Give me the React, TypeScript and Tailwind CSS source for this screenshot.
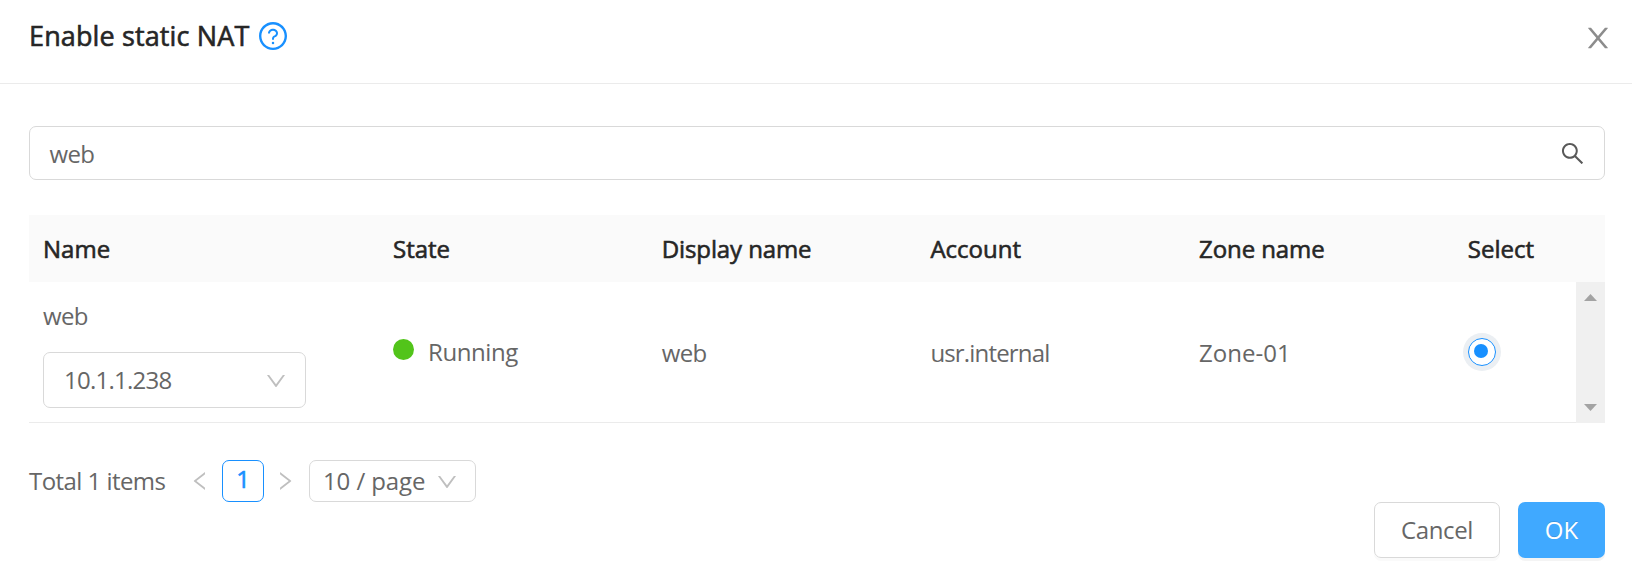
import {
  AiOutlineDown,
  AiOutlineLeft,
  AiOutlineQuestionCircle,
  AiOutlineRight,
  AiOutlineSearch,
} from "react-icons/ai";

const headings = [
  { label: "Name", style: "w-[350px]" },
  { label: "State", style: "w-[268.7px]" },
  { label: "Display name", style: "w-[268.7px] tracking-[-0.1px]" },
  { label: "Account", style: "w-[268.7px]" },
  { label: "Zone name", style: "w-[268.7px] tracking-[-0.1px]" },
  { label: "Select", style: "flex-1" },
];

function CloseIcon() {
  return (
    <svg className="mt-[22px] size-[32px] text-[#8c8c8c]" viewBox="0 0 1024 1024" fill="currentColor">
      <path d="M563.8 512l262.5-312.9c4.4-5.2.7-13.1-6.1-13.1h-79.8c-4.7 0-9.2 2.1-12.3 5.7L511.6 449.8 295.1 191.7c-3-3.6-7.5-5.7-12.3-5.7H203c-6.8 0-10.5 7.9-6.1 13.1L459.4 512 196.9 824.9A7.95 7.95 0 0 0 203 838h79.8c4.7 0 9.2-2.1 12.3-5.7l216.5-258.1 216.5 258.1c3 3.6 7.5 5.7 12.3 5.7h79.8c6.8 0 10.5-7.9 6.1-13.1L563.8 512z" />
    </svg>
  );
}

function Header() {
  return (
    <header className="flex h-[84px] items-start justify-between border-b border-[#ebebeb] pl-[29px] pr-[18px]">
      <div className="flex items-center pt-[15px]">
        <h1 className="w-[228px] whitespace-nowrap text-[27px] leading-[42px] tracking-[0.13px] text-[#262626] [-webkit-text-stroke:0.6px_#262626]">
          Enable static NAT
        </h1>
        <AiOutlineQuestionCircle className="size-[32px] text-[#1890ff]" />
      </div>
      <CloseIcon />
    </header>
  );
}

function SearchBox() {
  return (
    <div className="flex h-[54px] items-center justify-between rounded-[7px] border border-[#d9d9d9] pl-[19.5px] pr-[18px]">
      <span className="pt-[2px] tracking-[-0.6px]">web</span>
      <AiOutlineSearch className="size-[27px] text-[#595959]" />
    </div>
  );
}

function ResultTable() {
  return (
    <section className="mt-[35px]">
      <div className="flex h-[67px] items-center bg-[#fafafa] pl-[14px] text-[#262626] [-webkit-text-stroke:0.6px_#262626]">
        {headings.map((h) => (
          <div key={h.label} className={h.style}>
            {h.label}
          </div>
        ))}
      </div>
      <div className="flex h-[141px]">
        <div className="flex flex-1 items-center border-b border-[#ebebeb] pl-[14px]">
          <div className="w-[350px] shrink-0 pt-px">
            <div className="leading-[38px] tracking-[-0.6px]">web</div>
            <div className="mt-[17px] flex h-[56px] w-[263px] items-center justify-between rounded-[7px] border border-[#d9d9d9] pl-[20px] pr-[17px]">
              <span className="tracking-[-0.75px]">10.1.1.238</span>
              <AiOutlineDown className="mt-[2px] size-[24px] text-[#bfbfbf]" />
            </div>
          </div>
          <div className="flex w-[268.7px] shrink-0 items-center">
            <span className="mb-[5px] mr-[14px] size-[21px] rounded-full bg-[#52c41a]" />
            <span className="tracking-[-0.4px]">Running</span>
          </div>
          <div className="w-[268.7px] shrink-0 pt-px tracking-[-0.6px]">web</div>
          <div className="w-[268.7px] shrink-0 pt-px tracking-[-0.83px]">usr.internal</div>
          <div className="w-[268.7px] shrink-0 pt-px">Zone-01</div>
          <div className="flex size-[28px] items-center justify-center rounded-full border border-[#1890ff] bg-white shadow-[0_0_0_5px_#ebeff3]">
            <span className="mb-[2px] mr-[2px] size-[14px] rounded-full bg-[#1890ff]" />
          </div>
        </div>
        <div className="flex w-[29px] flex-col items-center justify-between bg-[#f0f0f0] pb-[12px] pt-[12px] text-[#a3a3a3]">
          <svg className="h-[7px] w-[13px]" viewBox="0 0 13 7" fill="currentColor">
            <path d="M0 7 6.5 0 13 7Z" />
          </svg>
          <svg className="h-[7px] w-[13px]" viewBox="0 0 13 7" fill="currentColor">
            <path d="M0 0 6.5 7 13 0Z" />
          </svg>
        </div>
      </div>
    </section>
  );
}

function Pagination() {
  return (
    <nav className="mt-[37px] flex h-[42px] items-center">
      <span className="w-[159px] tracking-[-0.55px]">Total 1 items</span>
      <AiOutlineLeft className="size-[24px] text-[#bfbfbf]" />
      <span className="ml-[10px] flex size-[42px] justify-center rounded-[7px] border border-[#1890ff] leading-[36px] text-[#1890ff] [-webkit-text-stroke:0.6px_#1890ff]">
        1
      </span>
      <AiOutlineRight className="ml-[9px] size-[24px] text-[#bfbfbf]" />
      <div className="ml-[12px] flex h-[42px] w-[167px] items-center justify-between rounded-[7px] border border-[#d9d9d9] pl-[13px] pr-[16px]">
        <span className="tracking-[-0.1px]">10 / page</span>
        <AiOutlineDown className="mt-[2px] size-[24px] text-[#bfbfbf]" />
      </div>
    </nav>
  );
}

export default function App() {
  return (
    <div className="h-[584px] w-[1632px] overflow-hidden bg-white font-['Segoe_UI','Open_Sans',sans-serif] text-[24px] text-[#666666]">
      <Header />
      <main className="pl-[29px] pr-[27px] pt-[42px]">
        <SearchBox />
        <ResultTable />
        <Pagination />
        <div className="flex justify-end gap-[18px]">
          <button className="h-[56px] w-[126px] rounded-[7px] border border-[#d9d9d9] tracking-[-0.35px] shadow-[0_3px_0_#fafafa]">
            Cancel
          </button>
          <button className="h-[56px] w-[87px] rounded-[7px] bg-[#40a9ff] text-white shadow-[0_3px_0_#f4f4f4] [text-shadow:0_-1px_0_rgba(0,0,0,0.12)]">
            OK
          </button>
        </div>
      </main>
    </div>
  );
}
